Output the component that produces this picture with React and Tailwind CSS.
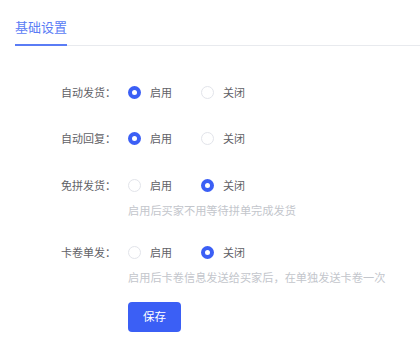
import { useState } from 'react';

const settings = [
    { key: 'autoShip', label: '自动发货：', value: true },
    { key: 'autoReply', label: '自动回复：', value: true },
    { key: 'noGroup', label: '免拼发货：', value: false, hint: '启用后买家不用等待拼单完成发货' },
    { key: 'cardSingle', label: '卡卷单发：', value: false, hint: '启用后卡卷信息发送给买家后，在单独发送卡卷一次' },
];

const gaps = ['', 'mt-[26px]', 'mt-[27px]', 'mt-[24px]'];

const Radio = ({ checked, label, onClick }) => (
    <label onClick={onClick} className="inline-flex items-center gap-[9px] mr-[29px] cursor-pointer">
        {checked ? (
            <span className="w-[13px] h-[13px] rounded-full bg-[#3b5ff5] flex items-center justify-center">
                <span className="w-[5px] h-[5px] rounded-full bg-white" />
            </span>
        ) : (
            <span className="w-[13px] h-[13px] rounded-full border border-[#e2e4ea] bg-white" />
        )}
        <span className="text-[11px] text-[#5f6166]">{label}</span>
    </label>
);

const App = () => {
    const [values, setValues] = useState(
        Object.fromEntries(settings.map((s) => [s.key, s.value]))
    );

    return (
        <div className="w-[420px] h-[344px] bg-white overflow-hidden" style={{ fontFamily: '"Noto Sans CJK SC", "Noto Sans", sans-serif' }}>
            {/* Tabs */}
            <div className="ml-[15px] pt-[18px] border-b border-[#e8eaee] flex">
                <div className="text-[13px] leading-[18px] text-[#5a7cf5] pb-[8px] border-b-2 border-[#5a7cf5] -mb-px">
                    基础设置
                </div>
            </div>

            {/* Form */}
            <div className="pt-[36px]">
                {settings.map((s, i) => (
                    <div key={s.key} className={gaps[i]}>
                        <div className="flex items-center h-5">
                            <div className="w-[116px] text-right text-[11px] text-[#5f6166]">{s.label}</div>
                            <div className="pl-[12px] flex items-center">
                                <Radio checked={values[s.key]} label="启用" onClick={() => setValues({ ...values, [s.key]: true })} />
                                <Radio checked={!values[s.key]} label="关闭" onClick={() => setValues({ ...values, [s.key]: false })} />
                            </div>
                        </div>
                        {s.hint && (
                            <div className="pl-[128px] mt-[7px] text-[11.2px] leading-4 text-[#c3c6cc]">{s.hint}</div>
                        )}
                    </div>
                ))}

                <div className="pl-[128px] mt-[17px]">
                    <button className="w-[53px] h-[30px] rounded-[4px] bg-[#3b5ff5] text-white text-[11.5px]">
                        保存
                    </button>
                </div>
            </div>
        </div>
    );
};

export default App;
